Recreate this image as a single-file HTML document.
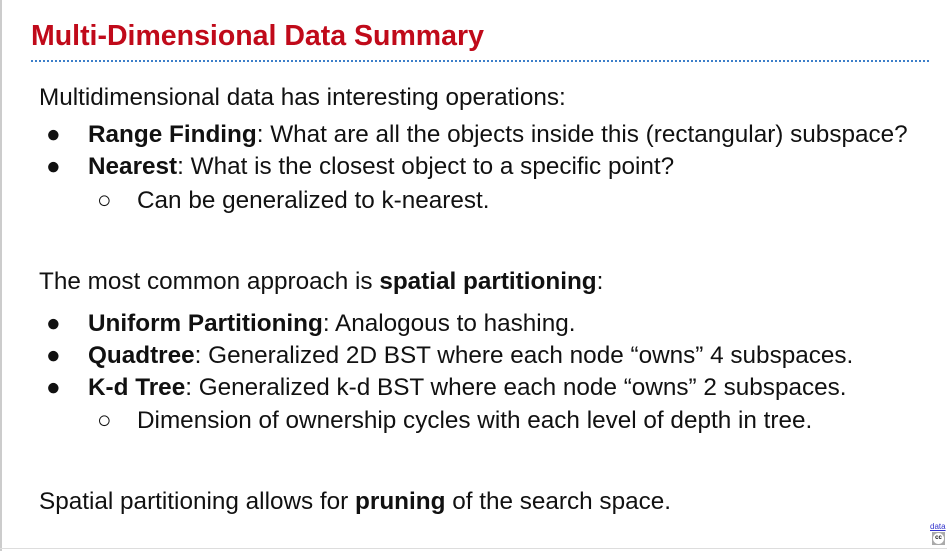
<!DOCTYPE html><html><head><style>
body{margin:0;width:947px;height:551px;background:#fff;position:relative;overflow:hidden;font-family:"Liberation Sans",sans-serif;color:#111}
.l{position:absolute;white-space:nowrap;font-size:24.3px;line-height:30px}
b{font-weight:bold}
</style></head><body>
<div style="position:absolute;left:0;top:0;width:2px;height:551px;background:#ccc"></div>
<div style="position:absolute;left:0;top:548px;width:947px;height:1px;background:#ddd"></div>
<div class="l" style="left:31px;top:21px;font-size:28.5px;font-weight:bold;color:#c00a1a">Multi-Dimensional Data Summary</div>
<div style="position:absolute;left:31px;top:60px;width:898px;border-top:2px dotted #3d7fc9"></div>
<div class="l" style="left:39px;top:83px">Multidimensional data has interesting operations:</div>
<div class="l" style="left:46px;top:120px">●</div><div class="l" style="left:88px;top:120px"><b>Range Finding</b>: What are all the objects inside this (rectangular) subspace?</div>
<div class="l" style="left:46px;top:152px">●</div><div class="l" style="left:88px;top:152px"><b>Nearest</b>: What is the closest object to a specific point?</div>
<div class="l" style="left:97px;top:186px">○</div><div class="l" style="left:137px;top:186px">Can be generalized to k-nearest.</div>
<div class="l" style="left:39px;top:267px">The most common approach is <b>spatial partitioning</b>:</div>
<div class="l" style="left:46px;top:309px">●</div><div class="l" style="left:88px;top:309px"><b>Uniform Partitioning</b>: Analogous to hashing.</div>
<div class="l" style="left:46px;top:341px">●</div><div class="l" style="left:88px;top:341px"><b>Quadtree</b>: Generalized 2D BST where each node “owns” 4 subspaces.</div>
<div class="l" style="left:46px;top:373px">●</div><div class="l" style="left:88px;top:373px"><b>K-d Tree</b>: Generalized k-d BST where each node “owns” 2 subspaces.</div>
<div class="l" style="left:97px;top:406px">○</div><div class="l" style="left:137px;top:406px">Dimension of ownership cycles with each level of depth in tree.</div>
<div class="l" style="left:39px;top:487px">Spatial partitioning allows for <b>pruning</b> of the search space.</div>
<div style="position:absolute;left:930px;top:522px;font-size:8px;color:#33c;text-decoration:underline">data</div>
<div style="position:absolute;left:932px;top:532px;width:13px;height:13px;background:#aaa"><div style="margin:1px;width:11px;height:11px;border-radius:50%;background:#fff;font-size:6px;font-weight:bold;text-align:center;line-height:11px">cc</div></div>
</body></html>
